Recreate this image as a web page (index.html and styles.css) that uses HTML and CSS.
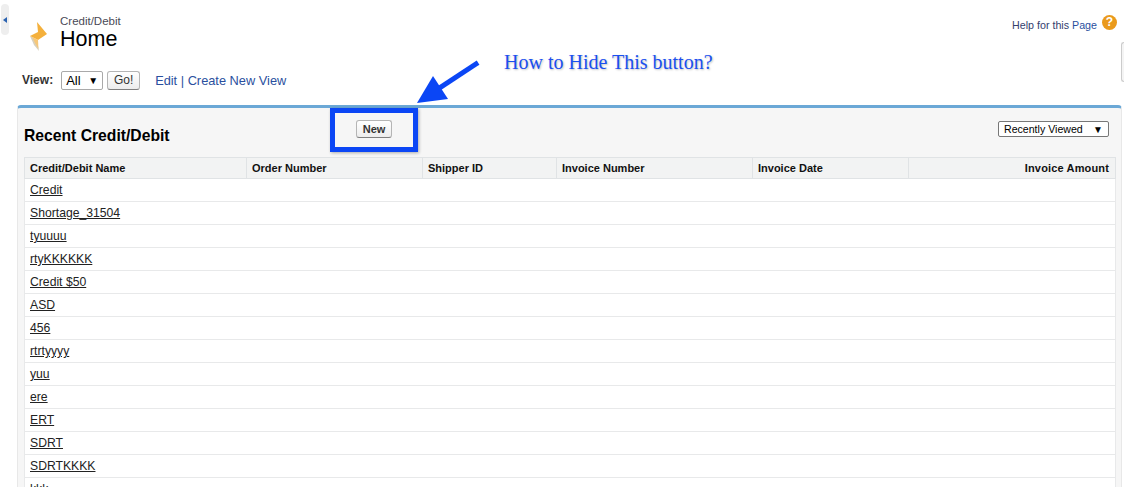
FILE: index.html
```html
<!DOCTYPE html>
<html lang="en">
<head>
    <meta charset="UTF-8">
    <meta name="viewport" content="width=device-width, initial-scale=1.0">
    <title>Credit/Debit Home</title>
    <link rel="stylesheet" href="styles.css">
</head>
<body>

<!-- Sidebar handle -->
<div class="side-handle"><span class="side-arrow"></span></div>
<div class="scroll-handle"></div>

<div class="page-head">
    <svg class="page-icon" width="20" height="33" viewBox="0 0 20 33">
        <path d="M1 16 L8 20 L10 31 L5 25 Z" fill="#d8d0bc"/>
        <path d="M8 2 L18 14 L9 20 L1 16 L9 12 Z" fill="#f4b03c"/>
        <path d="M3 17 L9 20 L9.5 29 L6 23 Z" fill="#f6c779"/>
    </svg>
    <div class="titles">
        <div class="object-type">Credit/Debit</div>
        <h1>Home</h1>
    </div>
    <div class="help">
        <span class="help-text">Help for this <a href="#">Page</a></span>
        <span class="help-icon">?</span>
    </div>
</div>

<div class="view-row">
    <label>View:</label>
    <div class="fake-select view-select"><span>All</span><span class="caret">&#9660;</span></div>
    <button class="btn go-btn">Go!</button>
    <div class="view-links"><a href="#">Edit</a> | <a href="#">Create New View</a></div>
</div>

<div class="panel">
    <div class="panel-head">
        <h2>Recent Credit/Debit</h2>
        <button class="btn new-btn">New</button>
        <div class="fake-select recent-select"><span>Recently Viewed</span><span class="caret">&#9660;</span></div>
    </div>
    <table class="list">
        <thead>
            <tr>
                <th class="c1">Credit/Debit Name</th>
                <th class="c2">Order Number</th>
                <th class="c3">Shipper ID</th>
                <th class="c4">Invoice Number</th>
                <th class="c5">Invoice Date</th>
                <th class="c6">Invoice Amount</th>
            </tr>
        </thead>
        <tbody>
            <tr><td colspan="6"><a href="#">Credit</a></td></tr>
            <tr><td colspan="6"><a href="#">Shortage_31504</a></td></tr>
            <tr><td colspan="6"><a href="#">tyuuuu</a></td></tr>
            <tr><td colspan="6"><a href="#">rtyKKKKKK</a></td></tr>
            <tr><td colspan="6"><a href="#">Credit $50</a></td></tr>
            <tr><td colspan="6"><a href="#">ASD</a></td></tr>
            <tr><td colspan="6"><a href="#">456</a></td></tr>
            <tr><td colspan="6"><a href="#">rtrtyyyy</a></td></tr>
            <tr><td colspan="6"><a href="#">yuu</a></td></tr>
            <tr><td colspan="6"><a href="#">ere</a></td></tr>
            <tr><td colspan="6"><a href="#">ERT</a></td></tr>
            <tr><td colspan="6"><a href="#">SDRT</a></td></tr>
            <tr><td colspan="6"><a href="#">SDRTKKKK</a></td></tr>
            <tr><td colspan="6"><a href="#">kkk</a></td></tr>
        </tbody>
    </table>
</div>

<!-- Annotation drawn on top of the screenshot -->
<div class="note-box"></div>
<svg class="note-arrow" width="70" height="52" viewBox="0 0 70 52">
    <path d="M59 7 L24 30" stroke="#0b46f5" stroke-width="5" stroke-linecap="square" fill="none"/>
    <path d="M0 46 L16 19 L31 42 Z" fill="#0b46f5"/>
</svg>
<div class="note-text">How to Hide This button?</div>

</body>
</html>
```

FILE: styles.css
```css
html, body {
    height: 100%;
    overflow: hidden;
}
body {
    font-family: "Liberation Sans", Arial, sans-serif;
    font-size: 12px;
    color: #000;
    background-color: #fff;
    margin: 0;
    padding: 0;
}
a {
    color: #2a4f9e;
    text-decoration: none;
}
.side-handle {
    position: absolute;
    top: 4px;
    left: 1px;
    width: 8px;
    height: 31px;
    background-color: #eee;
    border-radius: 4px;
}
.side-arrow {
    position: absolute;
    top: 13px;
    left: 2px;
    border-right: 4px solid #2a62b0;
    border-top: 3px solid transparent;
    border-bottom: 3px solid transparent;
}
.scroll-handle {
    position: absolute;
    top: 42px;
    right: 0;
    width: 2px;
    height: 38px;
    border: 1px solid #ccc;
    border-right: none;
    background-color: #f4f4f4;
    border-radius: 4px 0 0 4px;
}
.page-head {
    display: flex;
    align-items: flex-start;
    height: 70px;
    padding-left: 29px;
    box-sizing: border-box;
    padding-top: 15px;
}
.page-icon {
    margin-top: 5px;
    margin-right: 11px;
}
.object-type {
    font-size: 11.5px;
    line-height: 13px;
    color: #4a4a56;
}
h1 {
    font-size: 21.5px;
    font-weight: normal;
    line-height: 22px;
    margin: 0;
}
.help {
    margin-left: auto;
    margin-right: 7px;
    display: flex;
    align-items: flex-start;
    gap: 5px;
}
.help-text {
    font-size: 10.7px;
    line-height: 13px;
    margin-top: 4px;
    color: #333e6e;
}
.help-icon {
    width: 15px;
    height: 15px;
    border-radius: 50%;
    background-color: #ea9a1c;
    color: #fff;
    font-weight: bold;
    font-size: 12px;
    line-height: 15px;
    text-align: center;
}
.view-row {
    display: flex;
    align-items: center;
    height: 20px;
    padding-left: 22px;
    margin-bottom: 15px;
}
.view-row label {
    font-weight: bold;
    color: #333;
    margin-right: 8px;
}
.fake-select {
    display: flex;
    justify-content: space-between;
    align-items: center;
    box-sizing: border-box;
    border: 1px solid #a9a9a9;
    border-radius: 2px;
    background-color: #fff;
}
.view-select {
    width: 42px;
    height: 19px;
    padding: 0 4px;
    font-size: 13px;
    margin-right: 4px;
}
.caret {
    font-size: 10px;
}
.btn {
    font-family: "Liberation Sans", Arial, sans-serif;
    font-weight: bold;
    font-size: 11px;
    color: #333;
    padding: 0;
    background: linear-gradient(#fff, #ededed);
    border: 1px solid #b5b5b5;
    border-bottom-color: #7f7f7f;
    border-radius: 3px;
}
.go-btn {
    width: 33px;
    height: 19px;
    font-weight: normal;
    font-size: 12px;
}
.view-links {
    margin-left: 15px;
    font-size: 12.8px;
    color: #2a4f9e;
}
.panel {
    margin-left: 17px;
    margin-right: 2px;
    padding: 0 5px 0 6px;
    background-color: #f6f6f6;
    border-top: 3px solid #6ba8d6;
    border-left: 1px solid #e8e8e8;
    border-right: 1px solid #e8e8e8;
    border-radius: 4px 4px 0 0;
}
.panel-head {
    display: flex;
    align-items: center;
    height: 49px;
    padding-top: 1px;
    box-sizing: border-box;
    position: relative;
}
h2 {
    font-size: 15.7px;
    margin: 0;
    width: 332px;
    margin-top: 5px;
}
.new-btn {
    width: 36px;
    height: 18px;
    margin-top: -9px;
}
.recent-select {
    width: 111px;
    height: 16px;
    margin-left: auto;
    margin-right: 7px;
    margin-top: -8px;
    padding: 0 5px;
    font-size: 10.6px;
    border-color: #777;
}
.list {
    width: 1091px;
    table-layout: fixed;
    border-collapse: collapse;
    background-color: #fff;
}
.list th {
    height: 21px;
    padding: 0 5px;
    font-size: 11px;
    text-align: left;
    color: #111;
    background-color: #f2f3f3;
    border: 1px solid #e0e3e5;
    box-sizing: border-box;
}
.list .c1 { width: 222px; }
.list .c2 { width: 176px; }
.list .c3 { width: 134px; }
.list .c4 { width: 196px; }
.list .c5 { width: 156px; }
.list .c6 {
    width: 207px;
    padding-right: 6px;
    text-align: right;
    letter-spacing: 0.15px;
}
.list td {
    height: 23px;
    padding: 0 5px;
    box-sizing: border-box;
    border: 1px solid #e8e9ea;
    border-width: 0 1px 1px 1px;
    font-size: 12.2px;
}
.list td a {
    color: #222;
    text-decoration: underline;
}
.note-box {
    position: absolute;
    top: 108px;
    left: 330px;
    width: 78px;
    height: 34px;
    border: 5px solid #0b46f5;
    box-shadow: 1px 1px 3px rgba(0, 0, 0, 0.3);
}
.note-arrow {
    position: absolute;
    top: 57px;
    left: 417px;
}
.note-text {
    position: absolute;
    top: 51px;
    left: 504px;
    font-family: "Liberation Serif", "Times New Roman", serif;
    font-size: 20px;
    color: #1a50f0;
    text-shadow: 1px 1px 2px rgba(0, 0, 0, 0.25);
}
```
